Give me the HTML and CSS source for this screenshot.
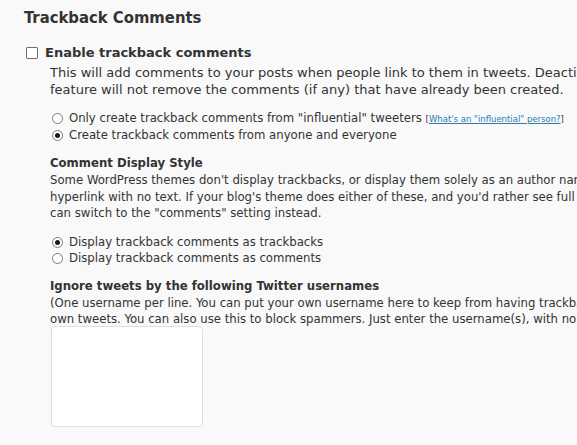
FILE: index.html
```html
<!DOCTYPE html>
<html>
<head>
<meta charset="utf-8">
<link rel="stylesheet" href="styles.css">
</head>
<body>
<div class="wrap">
  <h2 class="title">Trackback Comments</h2>
  <div class="opt">
    <label class="main"><input type="checkbox" class="cb"><span>Enable trackback comments</span></label>
    <div class="inner">
      <p class="desc lead">This will add comments to your posts when people link to them in tweets. Deactivating this<br>feature will not remove the comments (if any) that have already been created.</p>
      <div class="radios first">
        <label class="r"><input type="radio" name="a" class="rb"><span>Only create trackback comments from "influential" tweeters <span class="small">[<a href="#">What's an "influential" person?</a>]</span></span></label>
        <label class="r"><input type="radio" name="a" class="rb" checked><span>Create trackback comments from anyone and everyone</span></label>
      </div>
      <h4 class="sub">Comment Display Style</h4>
      <p class="desc c2">Some WordPress themes don't display trackbacks, or display them solely as an author name with a<br>hyperlink with no text. If your blog's theme does either of these, and you'd rather see full text, you<br>can switch to the "comments" setting instead.</p>
      <div class="radios second">
        <label class="r"><input type="radio" name="b" class="rb" checked><span>Display trackback comments as trackbacks</span></label>
        <label class="r"><input type="radio" name="b" class="rb"><span>Display trackback comments as comments</span></label>
      </div>
      <h4 class="sub">Ignore tweets by the following Twitter usernames</h4>
      <p class="desc c3">(One username per line. You can put your own username here to keep from having trackbacks for your<br>own tweets. You can also use this to block spammers. Just enter the username(s), with no @ sign.)</p>
      <textarea class="ta"></textarea>
    </div>
  </div>
</div>
</body>
</html>
```
FILE: styles.css
```css
html, body {
  margin: 0;
  padding: 0;
  background: #f9f9f9;
}
body {
  font-family: "DejaVu Sans", Verdana, sans-serif;
  color: #333;
  font-size: 13px;
  overflow: hidden;
  width: 577px;
  height: 445px;
}
.wrap {
  padding: 8px 0 0 24px;
  width: 900px;
}
.title {
  margin: 0;
  font-family: "DejaVu Sans Condensed", "DejaVu Sans", sans-serif;
  font-stretch: semi-condensed;
  font-size: 16.5px;
  font-weight: bold;
  line-height: 20px;
  color: #333;
}
.opt {
  margin-top: 16px;
}
.main {
  display: flex;
  align-items: center;
  gap: 7px;
  font-weight: bold;
  font-size: 13px;
  line-height: 18px;
}
.cb {
  appearance: none;
  -webkit-appearance: none;
  width: 12px;
  height: 12px;
  margin: 0 0 0 2px;
  box-sizing: border-box;
  border: 1px solid #6f6f6f;
  border-radius: 1px;
  background: #fff;
}
.inner {
  margin-left: 26px;
  width: 760px;
}
.desc {
  margin: 0;
  white-space: nowrap;
}
.lead {
  margin-top: 2px;
  font-size: 13px;
  line-height: 17px;
}
.c2, .c3, .radios, .sub {
  font-family: "DejaVu Sans Condensed", "DejaVu Sans", sans-serif;
  font-stretch: semi-condensed;
}
.c2 {
  margin-top: 1px;
  font-size: 13px;
  line-height: 16.5px;
}
.c3 {
  margin-top: 1.5px;
  font-size: 13px;
  line-height: 16px;
}
.radios {
  display: flex;
  flex-direction: column;
  margin-left: 2px;
  font-size: 13px;
}
.radios.first {
  margin-top: 12px;
}
.radios.second {
  margin-top: 12.5px;
}
.r {
  display: flex;
  align-items: center;
  gap: 6px;
  line-height: 16px;
  white-space: nowrap;
}
.rb {
  appearance: none;
  -webkit-appearance: none;
  width: 11px;
  height: 11px;
  margin: 0;
  box-sizing: border-box;
  border: 1px solid #7a7a7a;
  border-radius: 50%;
  background: #fff;
  position: relative;
  flex: none;
}
.rb:checked::after {
  content: "";
  position: absolute;
  left: 2px;
  top: 2px;
  width: 5px;
  height: 5px;
  border-radius: 50%;
  background: #1a1a1a;
}
.small {
  font-family: "DejaVu Sans", sans-serif;
  font-stretch: normal;
  font-size: 8.5px;
  color: #5a2a2a;
}
.small a {
  color: #2a7bb0;
  text-decoration: underline;
}
.sub {
  margin: 0;
  font-size: 13px;
  font-weight: bold;
  line-height: 17px;
}
.radios.first + .sub {
  margin-top: 11px;
}
.radios.second + .sub {
  margin-top: 10.5px;
}
.ta {
  display: block;
  width: 152px;
  height: 101px;
  box-sizing: border-box;
  border: 1px solid #dfdfdf;
  border-radius: 4px;
  background: #fff;
  margin: -1px 0 0 1px;
  resize: none;
  outline: none;
}
```
